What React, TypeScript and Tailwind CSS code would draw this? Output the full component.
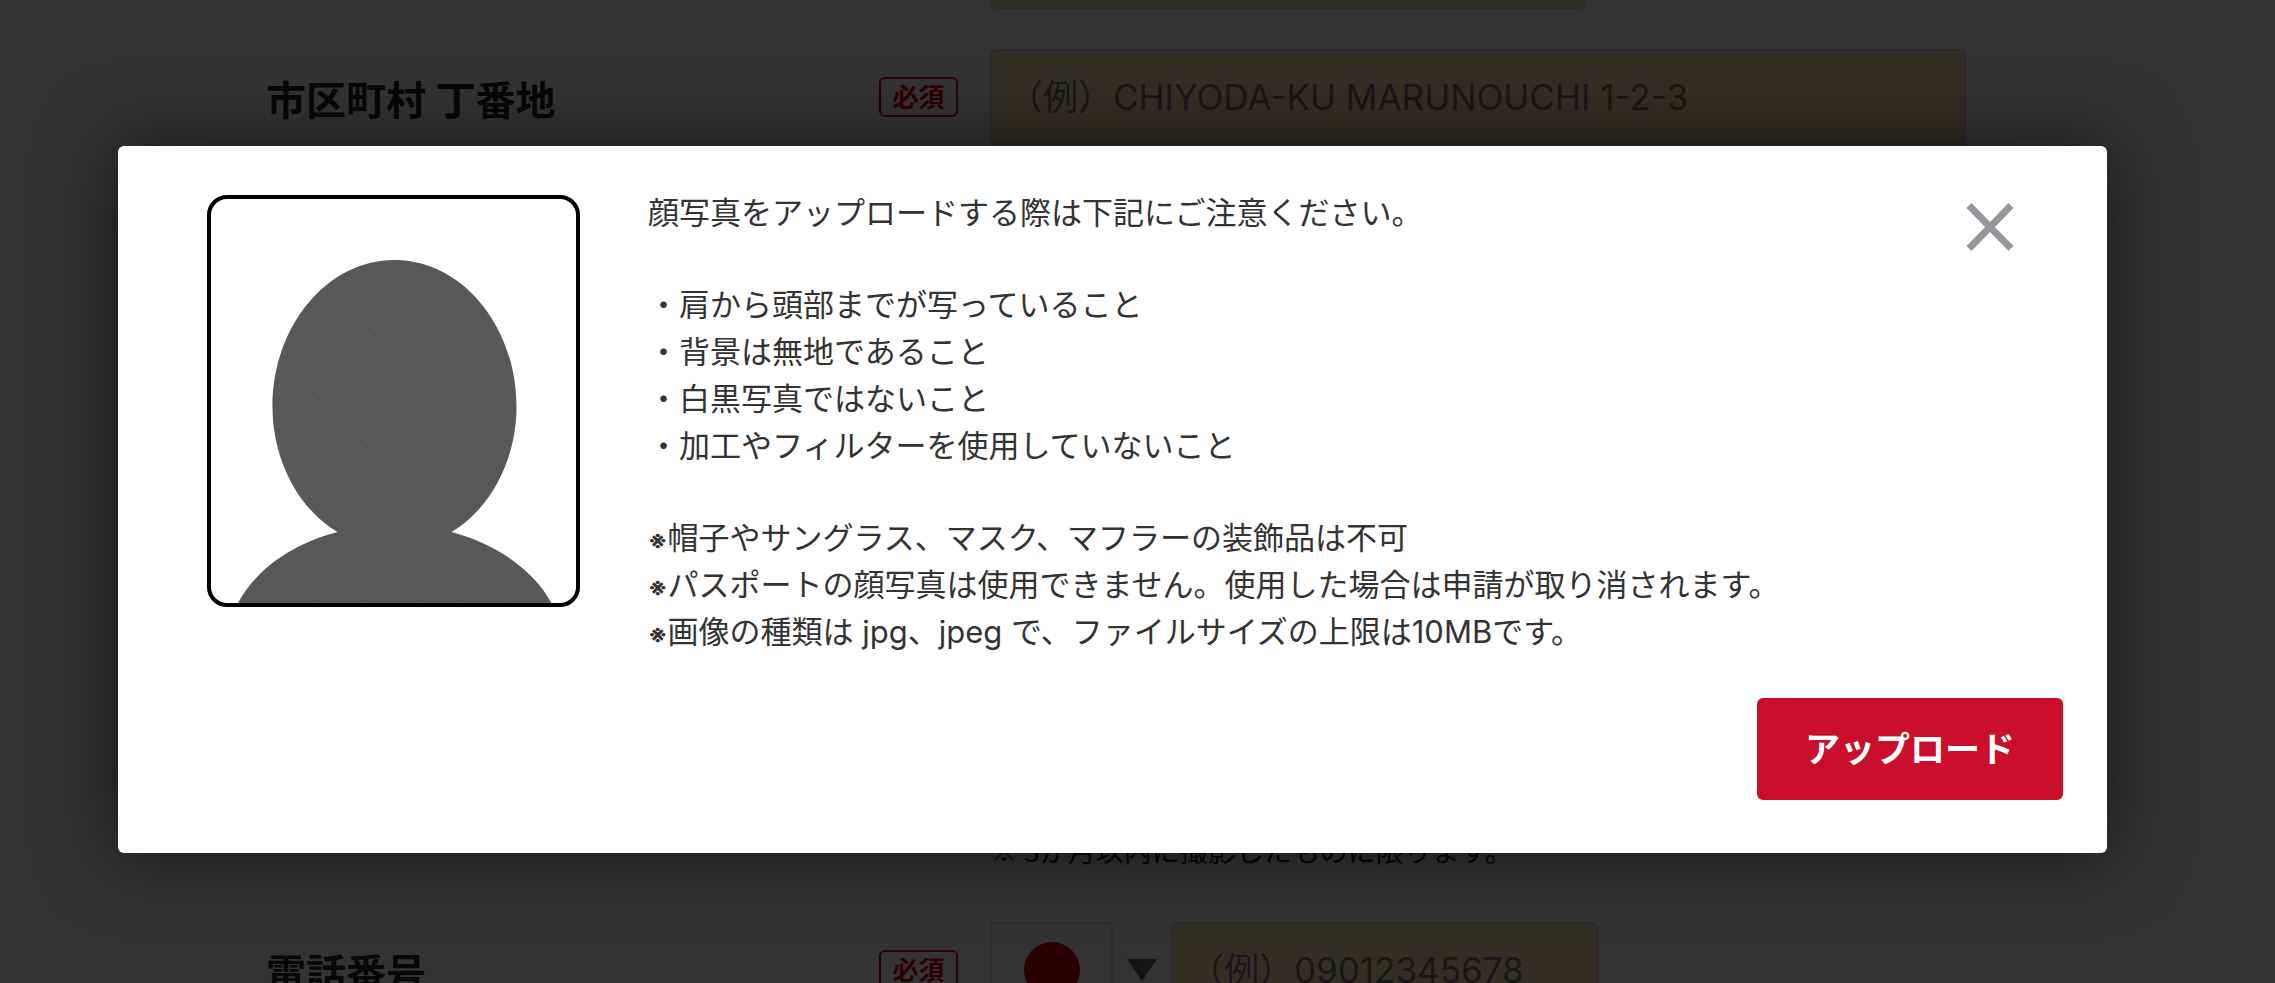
import React, { useState } from "react";

const conditions = [
  "・肩から頭部までが写っていること",
  "・背景は無地であること",
  "・白黒写真ではないこと",
  "・加工やフィルターを使用していないこと",
];

const notes = [
  "帽子やサングラス、マスク、マフラーの装飾品は不可",
  "パスポートの顔写真は使用できません。使用した場合は申請が取り消されます。",
  "画像の種類は jpg、jpeg で、ファイルサイズの上限は10MBです。",
];

const inputClass =
  "h-24 rounded-md border-2 border-[#ced4da] bg-[#ffe6b3] px-4 text-[35px] text-gray-900 placeholder:text-[#6c757d] placeholder:opacity-100";

const RequiredBadge = () => (
  <span className="flex h-10 w-[79px] items-center justify-center rounded-md border-2 border-[#e60012] text-[26px] font-bold text-[#e60012]">
    必須
  </span>
);

interface FormRowProps {
  id: string;
  label: string;
  children: React.ReactNode;
}

const FormRow = ({ id, label, children }: FormRowProps) => (
  <div className="flex items-center gap-8">
    <div className="flex w-[692px] shrink-0 items-center justify-between">
      <label htmlFor={id} className="pt-2 text-[40px] font-bold text-[#212529]">
        {label}
      </label>
      <RequiredBadge />
    </div>
    <div className="flex flex-1 items-center">{children}</div>
  </div>
);

const FaceSample = () => (
  <svg
    viewBox="0 0 373 412"
    className="mt-1.5 h-[412px] w-[373px] shrink-0"
    aria-hidden="true"
  >
    <defs>
      <pattern
        id="grain"
        width="10"
        height="16"
        patternUnits="userSpaceOnUse"
        patternTransform="rotate(9)"
      >
        <rect x="1" y="1" width="1" height="1" fill="#6a6a6a" />
        <rect x="6" y="9" width="1" height="1" fill="#6a6a6a" />
      </pattern>
      <clipPath id="person">
        <path d="M187.500 65C255 65 309.500 131 309.500 212C309.500 263 285 313 244.500 337C286 348 326 373 345 409H30.500C49 373 88 348 130.500 337C90 313 65.500 263 65.500 212C65.500 131 120 65 187.500 65Z" />
      </clipPath>
    </defs>
    <g clipPath="url(#person)">
      <rect width="373" height="412" fill="#585858" />
      <rect x="70" y="80" width="235" height="332" fill="url(#grain)" />
    </g>
    <rect
      x="2"
      y="2"
      width="369"
      height="408"
      rx="18"
      fill="none"
      stroke="#000"
      strokeWidth="4"
    />
  </svg>
);

const UploadModal = ({ onClose }: { onClose: () => void }) => (
  <div className="absolute inset-0 bg-black/80 pt-[146px] pr-[168px] pl-[118px]">
    <div
      role="dialog"
      aria-modal="true"
      className="rounded-md bg-white pt-[43px] pr-11 pb-[53px] pl-[89px] text-[31px] leading-[47px] text-[#333] shadow-[0_0_72px_rgba(0,0,0,0.6)]"
    >
      <div className="flex items-start">
        <FaceSample />
        <div className="ml-[68px] flex flex-1 flex-col gap-[45px]">
          <p>顔写真をアップロードする際は下記にご注意ください。</p>
          <ul>
            {conditions.map((item) => (
              <li key={item}>{item}</li>
            ))}
          </ul>
          <ul>
            {notes.map((note) => (
              <li key={note}>
                <span className="text-[24px] leading-none font-bold">※</span>
                {note}
              </li>
            ))}
          </ul>
        </div>
        <button
          type="button"
          aria-label="閉じる"
          onClick={onClose}
          className="mt-3.5 mr-[49px] cursor-pointer text-[#96979c]"
        >
          <svg
            viewBox="0 0 48 48"
            className="size-12"
            fill="none"
            stroke="currentColor"
            strokeWidth="7"
          >
            <path d="M3 2.500L45 45.500M45 2.500L3 45.500" />
          </svg>
        </button>
      </div>
      <div className="mt-[43px] flex justify-end">
        <button
          type="button"
          className="h-[102px] cursor-pointer rounded-md bg-[#c90f2b] px-12 text-[35px] font-bold text-white"
        >
          アップロード
        </button>
      </div>
    </div>
  </div>
);

const App = () => {
  const [isOpen, setIsOpen] = useState(true);

  return (
    <div className="relative h-screen overflow-hidden bg-white font-['Inter','Noto_Sans_CJK_JP',sans-serif]">
      <form className="-mt-[87px] flex flex-col gap-10 pr-[309px] pl-[266px]">
        <div className="flex pl-[724px]">
          <input aria-label="都道府県" className={`${inputClass} w-[596px]`} />
        </div>
        <FormRow id="address" label="市区町村 丁番地">
          <input
            id="address"
            className={`${inputClass} w-full`}
            placeholder="（例）CHIYODA-KU MARUNOUCHI 1-2-3"
          />
        </FormRow>
        <div className="flex h-[697px] items-end pb-4 pl-[724px]">
          <p className="font-['Noto_Sans_CJK_JP',sans-serif] text-[28px] leading-8 text-[#212529]">
            ※ 3か月以内に撮影したものに限ります。
          </p>
        </div>
        <FormRow id="phone" label="電話番号">
          <button
            type="button"
            aria-label="国を選択"
            className="flex items-center"
          >
            <span className="flex h-24 w-[123px] items-center justify-center border-2 border-gray-200">
              <span className="size-14 rounded-full bg-[#d80000]" />
            </span>
            <svg viewBox="0 0 30 22" className="mx-3.5 h-[22px] w-[30px]">
              <path d="M0 0H30L15 22Z" fill="#666" />
            </svg>
          </button>
          <input
            id="phone"
            type="tel"
            className={`${inputClass} w-[428px]`}
            placeholder="（例）09012345678"
          />
        </FormRow>
      </form>
      {isOpen && <UploadModal onClose={() => setIsOpen(false)} />}
    </div>
  );
};

export default App;
